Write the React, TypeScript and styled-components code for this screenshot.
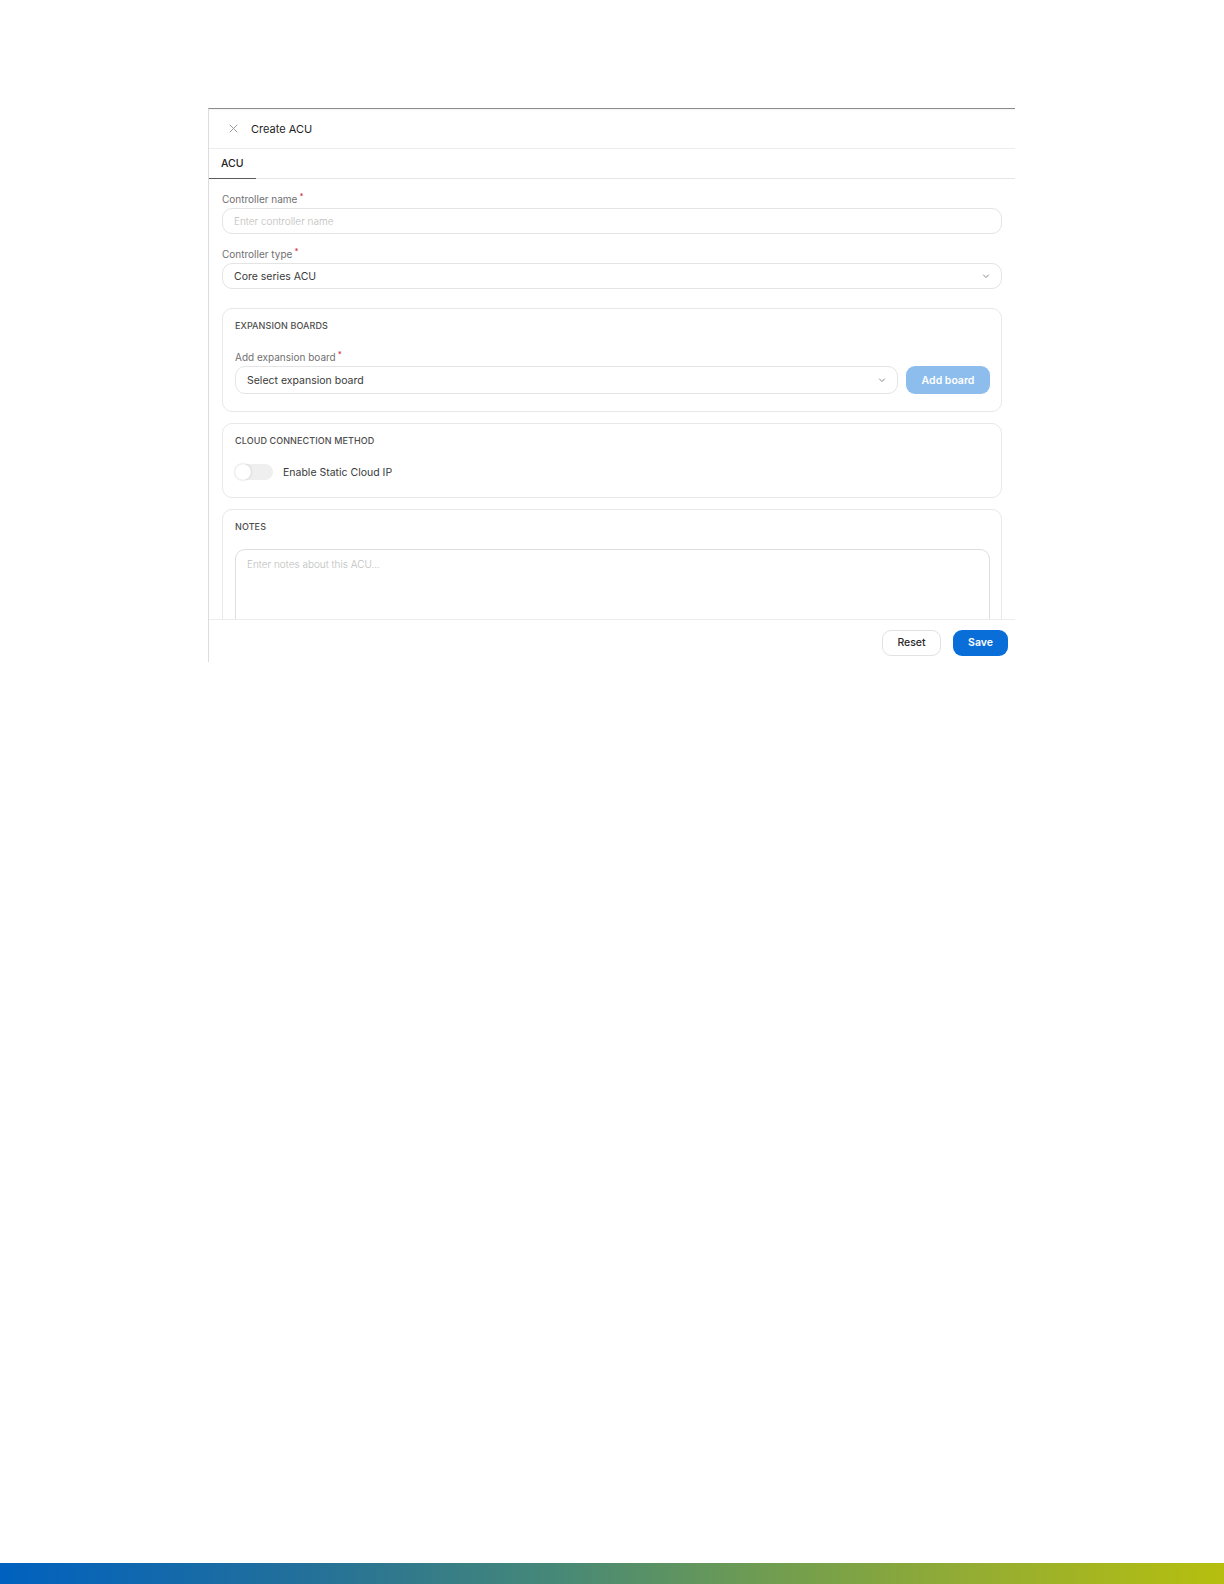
import React from "react";
import styled, { createGlobalStyle } from "styled-components";

const Global = createGlobalStyle`
  html, body, #root { margin: 0; padding: 0; height: 100%; }
  body { background: #ffffff; font-family: Inter, "Liberation Sans", Arial, sans-serif; color: #222; }
  * { box-sizing: border-box; }
`;

const Page = styled.div`
  min-height: 100vh;
  display: flex;
  flex-direction: column;
`;

const Content = styled.div`
  flex: 1;
  padding: 108px 0 0 208px;
`;

const BrandBar = styled.div`
  height: 21px;
  background: linear-gradient(90deg, #0061bf 0%, #23709a 25%, #468878 45%, #6e9c52 62%, #95ad32 80%, #b6bf0e 100%);
`;

const Panel = styled.div`
  width: 807px;
  height: 554px;
  display: flex;
  flex-direction: column;
  border-top: 1px solid #8c8c8c;
  border-left: 1px solid #dcdcdc;
  box-shadow: inset 0 2px 2px -1px rgba(0, 0, 0, 0.05);
  background: #fff;
`;

const Header = styled.div`
  height: 40px;
  display: flex;
  align-items: center;
  gap: 12px;
  padding-left: 19px;
  border-bottom: 1px solid #ececec;
  flex-shrink: 0;
`;

const CloseIcon = styled.svg`
  width: 11px;
  height: 11px;
  color: #9a9a9a;
`;

const Title = styled.span`
  font-size: 11px;
  color: #1e1e1e;
  font-weight: 400;
`;

const TabBar = styled.div`
  height: 30px;
  display: flex;
  border-bottom: 1px solid #e6e6e6;
  flex-shrink: 0;
`;

const Tab = styled.div<{ $active?: boolean }>`
  width: 47px;
  display: flex;
  align-items: center;
  padding-left: 12px;
  font-size: 10.5px;
  font-weight: 500;
  color: #222;
  margin-bottom: -1px;
  border-bottom: 1px solid ${(p) => (p.$active ? "#5a5a5a" : "transparent")};
`;

const Body = styled.div`
  flex: 1;
  overflow: hidden;
  padding: 13px 13px 0 13px;
  display: flex;
  flex-direction: column;
`;

const Field = styled.div<{ $mb?: number }>`
  display: flex;
  flex-direction: column;
  gap: 2px;
  margin-bottom: ${(p) => p.$mb ?? 13}px;
  flex-shrink: 0;
`;

const Label = styled.label`
  font-size: 10px;
  line-height: 14px;
  color: #707070;
`;

const Req = styled.sup`
  color: #d42a3c;
  font-size: 8px;
  margin-left: 2px;
  vertical-align: top;
  position: relative;
  top: -3px;
`;

const Input = styled.div<{ $h?: number; $grow?: boolean }>`
  height: ${(p) => p.$h ?? 26}px;
  border: 1px solid #e4e4e4;
  border-radius: 10px;
  display: flex;
  align-items: center;
  padding: 0 11px;
  font-size: 10px;
  color: #333;
  flex: ${(p) => (p.$grow ? "1 1 auto" : "0 0 auto")};
`;

const Placeholder = styled.span`
  color: #bdbdbd;
  font-weight: 300;
`;

const Value = styled.span`
  flex: 1;
  color: #3a3a3a;
  font-size: 10.5px;
`;

const Chevron = styled.svg`
  width: 8px;
  height: 8px;
  color: #777;
`;

const Card = styled.div<{ $pb?: number; $mb?: number }>`
  border: 1px solid #e8e8e8;
  border-radius: 10px;
  padding: 10px 11px ${(p) => p.$pb ?? 17}px 12px;
  margin-bottom: ${(p) => p.$mb ?? 11}px;
  display: flex;
  flex-direction: column;
  flex-shrink: 0;
`;

const CardTitle = styled.div<{ $mb?: number }>`
  font-size: 9px;
  font-weight: 500;
  color: #4e4e4e;
  letter-spacing: 0.1px;
  text-transform: uppercase;
  line-height: 14px;
  margin-bottom: ${(p) => p.$mb ?? 13}px;
`;

const Row = styled.div`
  display: flex;
  gap: 8px;
  align-items: center;
`;

const PrimaryButton = styled.button<{ $disabled?: boolean; $w: number; $h: number }>`
  width: ${(p) => p.$w}px;
  height: ${(p) => p.$h}px;
  border: none;
  border-radius: 9px;
  background: ${(p) => (p.$disabled ? "#8dbdec" : "#0a6ed8")};
  color: #fff;
  font-family: inherit;
  font-size: 10.5px;
  font-weight: 600;
  flex-shrink: 0;
`;

const GhostButton = styled.button`
  width: 59px;
  height: 26px;
  border: 1px solid #e2e2e2;
  border-radius: 9px;
  background: #fff;
  color: #2a2a2a;
  font-family: inherit;
  font-size: 10.5px;
  font-weight: 500;
`;

const ToggleRow = styled.div`
  display: flex;
  align-items: center;
  gap: 10px;
`;

const Track = styled.div`
  position: relative;
  width: 38px;
  height: 16px;
  border-radius: 8px;
  background: #efefef;
`;

const Knob = styled.div`
  position: absolute;
  left: 0;
  top: 0;
  width: 16px;
  height: 16px;
  border-radius: 50%;
  background: #fff;
  box-shadow: 0 0 2px rgba(0, 0, 0, 0.25);
`;

const ToggleText = styled.span`
  font-size: 10.5px;
  color: #3a3a3a;
`;

const TextArea = styled.div`
  height: 90px;
  border: 1px solid #dedede;
  border-radius: 10px;
  padding: 8px 11px;
  font-size: 10px;
  flex-shrink: 0;
`;

const Footer = styled.div`
  height: 43px;
  border-top: 1px solid #ececec;
  display: flex;
  justify-content: flex-end;
  align-items: center;
  gap: 12px;
  padding: 3px 7px 0 0;
  flex-shrink: 0;
`;

const ChevronDown = () => (
  <Chevron viewBox="0 0 8 8" fill="none">
    <path d="M1.5 3 L4 5.5 L6.5 3" stroke="currentColor" strokeWidth="0.9" strokeLinecap="round" strokeLinejoin="round" />
  </Chevron>
);

export default function App() {
  return (
    <Page>
      <Global />
      <Content>
        <Panel>
          <Header>
            <CloseIcon viewBox="0 0 11 11" fill="none">
              <path d="M2 2 L9 9 M9 2 L2 9" stroke="currentColor" strokeWidth="1" strokeLinecap="round" />
            </CloseIcon>
            <Title>Create ACU</Title>
          </Header>
          <TabBar>
            <Tab $active>ACU</Tab>
          </TabBar>
          <Body>
            <Field>
              <Label>
                Controller name<Req>*</Req>
              </Label>
              <Input>
                <Placeholder>Enter controller name</Placeholder>
              </Input>
            </Field>
            <Field $mb={19}>
              <Label>
                Controller type<Req>*</Req>
              </Label>
              <Input>
                <Value>Core series ACU</Value>
                <ChevronDown />
              </Input>
            </Field>

            <Card>
              <CardTitle $mb={17}>Expansion boards</CardTitle>
              <Field $mb={0}>
                <Label>
                  Add expansion board<Req>*</Req>
                </Label>
                <Row>
                  <Input $h={28} $grow>
                    <Value>Select expansion board</Value>
                    <ChevronDown />
                  </Input>
                  <PrimaryButton $disabled $w={84} $h={28}>
                    Add board
                  </PrimaryButton>
                </Row>
              </Field>
            </Card>

            <Card $pb={17} $mb={11}>
              <CardTitle $mb={16}>Cloud connection method</CardTitle>
              <ToggleRow>
                <Track>
                  <Knob />
                </Track>
                <ToggleText>Enable Static Cloud IP</ToggleText>
              </ToggleRow>
            </Card>

            <Card>
              <CardTitle $mb={15}>Notes</CardTitle>
              <TextArea>
                <Placeholder>Enter notes about this ACU...</Placeholder>
              </TextArea>
            </Card>
          </Body>
          <Footer>
            <GhostButton>Reset</GhostButton>
            <PrimaryButton $w={55} $h={26}>
              Save
            </PrimaryButton>
          </Footer>
        </Panel>
      </Content>
      <BrandBar />
    </Page>
  );
}
